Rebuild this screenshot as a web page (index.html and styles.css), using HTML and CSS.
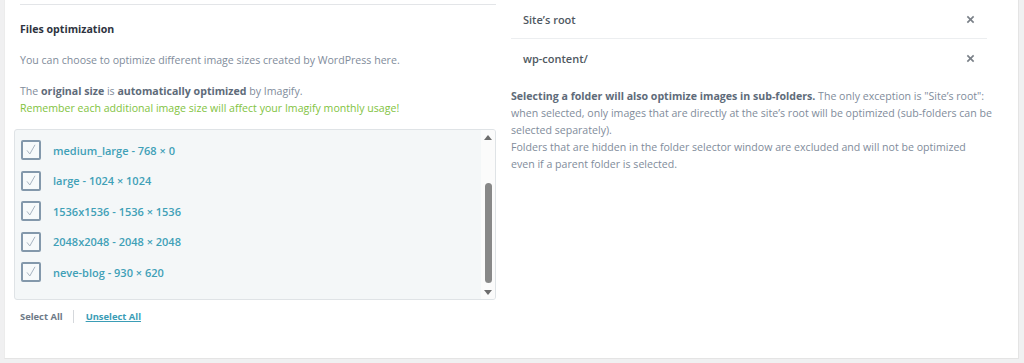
FILE: index.html
```html
<!DOCTYPE html>
<html lang="en">
<head>
<meta charset="utf-8">
<title>Files optimization</title>
<link rel="stylesheet" href="styles.css">
</head>
<body>
<div class="card">
  <section class="col-left">
    <div class="top-rule"></div>
    <h3 class="title">Files optimization</h3>
    <p class="text">You can choose to optimize different image sizes created by WordPress here.</p>
    <p class="text">The <strong>original size</strong> is <strong>automatically optimized</strong> by Imagify.<br>
      <span class="green">Remember each additional image size will affect your Imagify monthly usage!</span></p>
    <div class="sizes-box">
      <div class="sizes-viewport">
        <ul class="sizes">
          <li class="size"><span class="cb"><svg viewBox="0 0 20 20" width="20" height="20"><path d="M5 10.5 L8.5 15 L15 3.5"/></svg></span><span class="label">thumbnail - 150 × 150</span></li>
          <li class="size"><span class="cb"><svg viewBox="0 0 20 20" width="20" height="20"><path d="M5 10.5 L8.5 15 L15 3.5"/></svg></span><span class="label">medium - 300 × 300</span></li>
          <li class="size"><span class="cb"><svg viewBox="0 0 20 20" width="20" height="20"><path d="M5 10.5 L8.5 15 L15 3.5"/></svg></span><span class="label">medium_large - 768 × 0</span></li>
          <li class="size"><span class="cb"><svg viewBox="0 0 20 20" width="20" height="20"><path d="M5 10.5 L8.5 15 L15 3.5"/></svg></span><span class="label">large - 1024 × 1024</span></li>
          <li class="size"><span class="cb"><svg viewBox="0 0 20 20" width="20" height="20"><path d="M5 10.5 L8.5 15 L15 3.5"/></svg></span><span class="label">1536x1536 - 1536 × 1536</span></li>
          <li class="size"><span class="cb"><svg viewBox="0 0 20 20" width="20" height="20"><path d="M5 10.5 L8.5 15 L15 3.5"/></svg></span><span class="label">2048x2048 - 2048 × 2048</span></li>
          <li class="size"><span class="cb"><svg viewBox="0 0 20 20" width="20" height="20"><path d="M5 10.5 L8.5 15 L15 3.5"/></svg></span><span class="label">neve-blog - 930 × 620</span></li>
        </ul>
      </div>
      <div class="scrollbar">
        <span class="arrow-up"></span>
        <span class="thumb"></span>
        <span class="arrow-down"></span>
      </div>
    </div>
    <div class="select-links">
      <a class="sel-all">Select All</a>
      <span class="divider"></span>
      <a class="unsel-all">Unselect All</a>
    </div>
  </section>
  <section class="col-right">
    <div class="folder-row"><span class="folder-name">Site’s root</span><span class="remove"><svg viewBox="0 0 10 10" width="9" height="9"><path d="M1.5 1.5 L8.5 8.5 M8.5 1.5 L1.5 8.5"/></svg></span></div>
    <div class="folder-row"><span class="folder-name">wp-content/</span><span class="remove"><svg viewBox="0 0 10 10" width="9" height="9"><path d="M1.5 1.5 L8.5 8.5 M8.5 1.5 L1.5 8.5"/></svg></span></div>
    <p class="text note"><strong>Selecting a folder will also optimize images in sub-folders.</strong> The only exception is "Site’s root": when selected, only images that are directly at the site’s root will be optimized (sub-folders can be selected separately).<br>
      Folders that are hidden in the folder selector window are excluded and will not be optimized<br>
      even if a parent folder is selected.</p>
  </section>
</div>
</body>
</html>
```

FILE: styles.css
```css
* { box-sizing: border-box; }
html, body { margin: 0; padding: 0; }
body {
  background: #f0f0f1;
  font-family: "Open Sans", "Noto Sans", sans-serif;
  font-size: 10.6px;
  line-height: 17px;
  color: #7f8c9b;
  height: 363px;
  overflow: hidden;
}
.card {
  margin: 0 5px 0 4px;
  height: 359px;
  background: #fff;
  border-right: 1px solid #e4e4e4;
  border-bottom: 1px solid #e4e4e4;
  border-left: 1px solid #ececec;
  display: grid;
  grid-template-columns: 476px 496px;
  column-gap: 15px;
  padding: 0 0 0 15px;
}
.top-rule {
  height: 5px;
  border-bottom: 1px solid #e3e5e8;
}
.title {
  margin: 16px 0 0;
  font-size: 10.6px;
  line-height: 17px;
  font-weight: 700;
  color: #2e3440;
}
.text { margin: 14px 0 0; }
.text strong { color: #5e6b79; font-weight: 700; }
.green { color: #82c341; }
.sizes-box {
  margin-top: 12px;
  height: 171px;
  border: 1px solid #dfe3e6;
  border-radius: 3px;
  background: #f4f7f8;
  display: flex;
  overflow: hidden;
  margin-left: -6px;
  width: 482px;
}
.sizes-viewport {
  flex: 1;
  overflow: hidden;
}
.sizes {
  list-style: none;
  margin: -56px 0 0;
  padding: 0 0 0 6px;
}
.size {
  height: 30.5px;
  display: flex;
  align-items: center;
  gap: 12px;
  font-size: 11px;
}
.cb {
  width: 20px;
  height: 20px;
  border: 2px solid #8398ab;
  border-radius: 2px;
  background: #f7fafb;
  display: flex;
  align-items: center;
  justify-content: center;
}
.cb svg { width: 16px; height: 16px; }
.cb path { fill: none; stroke: #a4b1be; stroke-width: 1.2; }
.label {
  color: #3fa0b7;
  font-weight: 600;
}
.scrollbar {
  width: 14px;
  background: #fbfbfb;
  display: flex;
  flex-direction: column;
  align-items: center;
  padding: 5px 0 4px;
}
.arrow-up, .arrow-down {
  width: 0; height: 0;
  border-left: 4px solid transparent;
  border-right: 4px solid transparent;
}
.arrow-up { border-bottom: 5px solid #6d6d6d; }
.arrow-down { border-top: 5px solid #6d6d6d; margin-top: auto; }
.thumb {
  margin-top: 43px;
  width: 7px;
  height: 100px;
  border-radius: 4px;
  background: #888;
}
.select-links {
  margin-top: 8px;
  display: flex;
  align-items: center;
  font-size: 9.4px;
  font-weight: 700;
}
.sel-all { color: #6e7a87; }
.divider {
  width: 1px;
  height: 13px;
  background: #d5d8dc;
  margin: 0 12px 0 10px;
}
.unsel-all { color: #3b9db6; text-decoration: underline; }
.col-right { padding-top: 1px; }
.folder-row {
  width: 476px;
  height: 38px;
  display: flex;
  align-items: center;
  justify-content: space-between;
  padding: 0 12px 0 12px;
  font-size: 11px;
}
.folder-row:first-child { border-bottom: 1px solid #eceef0; }
.folder-name { color: #4f5861; font-weight: 600; }
.remove { display: flex; }
.remove path { stroke: #7a8088; stroke-width: 1.8; fill: none; }
.note { margin-top: 11px; }
```
